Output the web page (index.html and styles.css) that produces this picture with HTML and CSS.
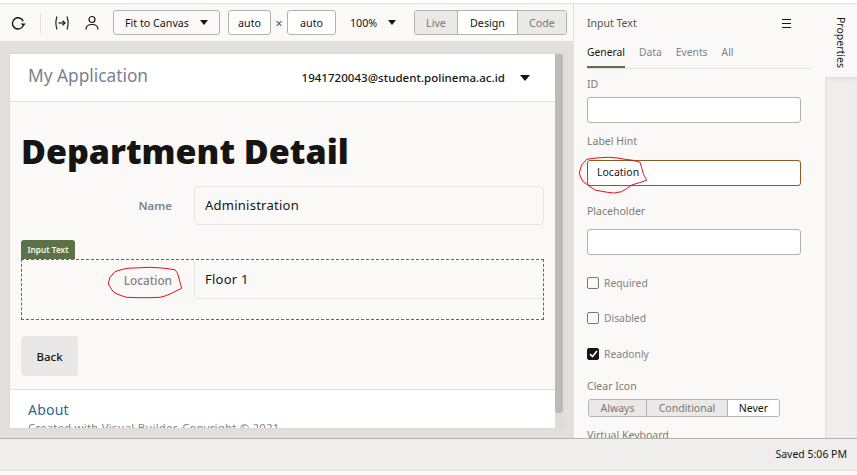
FILE: index.html
```html
<!DOCTYPE html>
<html lang="en">
<head>
<meta charset="utf-8">
<title>Department Detail</title>
<link rel="stylesheet" href="styles.css">
</head>
<body>
<div class="app">
  <div class="main">
    <div class="workspace">
      <div class="toolbar">
        <svg class="ico refresh" width="16" height="16" viewBox="0 0 16 16"><path d="M13.200 6.200A5.600 5.600 0 1 0 13 11" fill="none" stroke="#161513" stroke-width="1.400"/><path d="M10.800 8.600h5l-2.500 2.900z" fill="#161513"/></svg>
        <span class="tsep"></span>
        <svg class="ico vars" width="16" height="16" viewBox="0 0 16 16"><path d="M3 1.500Q.8 8 3 14.500M13 1.500Q15.200 8 13 14.500" fill="none" stroke="#161513" stroke-width="1.100"/><path d="M4.500 8h6.500" stroke="#161513" stroke-width="1.200"/><path d="M8.500 5.800 11 8l-2.500 2.200" fill="none" stroke="#161513" stroke-width="1.200"/></svg>
        <svg class="ico user" width="14" height="16" viewBox="0 0 14 16"><circle cx="7" cy="4.500" r="3" fill="none" stroke="#161513" stroke-width="1.200"/><path d="M1 14.500C1 11 3.500 9.500 7 9.500s6 1.500 6 5" fill="none" stroke="#161513" stroke-width="1.200"/></svg>
        <button class="tbtn fit">Fit to Canvas<span class="caret"></span></button>
        <span class="tinput a1">auto</span>
        <span class="times">×</span>
        <span class="tinput a2">auto</span>
        <span class="zoom">100%<span class="caret"></span></span>
        <div class="seg modes">
          <span class="off w-live">Live</span><span class="on w-design">Design</span><span class="off w-code">Code</span>
        </div>
      </div>
      <div class="canvas">
        <div class="page">
          <div class="scrollarea">
            <div class="apphead">
              <span class="apptitle">My Application</span>
              <span class="appuser">1941720043@student.polinema.ac.id</span>
              <span class="caret big"></span>
            </div>
            <div class="content">
              <h1>Department Detail</h1>
              <div class="row">
                <span class="flabel">Name</span>
                <div class="fvalue">Administration</div>
              </div>
              <div class="selected">
                <span class="seltag">Input Text</span>
                <div class="row inner">
                  <span class="flabel">Location
                    <svg class="scribble" width="76" height="33" viewBox="0 0 76 33"><path d="M8 5.700 13 4l7-1.700L32 1.800 43 1.300 56 2.100 68 3.700 70 6.500 71.300 9.700 72.800 15.700 74.700 22.300 69 25 63 28 58 30 53 31.300 43 31.700 31 31.700 19.700 31.300 14 29.500 8 27 5 24 1.300 18 2 14.500 3 11.300z" fill="none" stroke="#e8101c" stroke-width="1"/></svg>
                  </span>
                  <div class="fvalue">Floor 1</div>
                </div>
              </div>
              <button class="back">Back</button>
            </div>
            <div class="appfoot">
              <div class="about">About</div>
              <div class="copy">Created with Visual Builder, Copyright © 2021</div>
            </div>
          </div>
          <div class="sbar"><div class="thumb"></div></div>
        </div>
      </div>
    </div>
    <aside class="props">
      <div class="phead"><span>Input Text</span>
        <svg width="11" height="9" viewBox="0 0 11 9"><path d="M1 .5h9M1 4.500h9M1 8.500h9" stroke="#161513" stroke-width="1"/></svg>
      </div>
      <div class="tabs"><span class="tab active">General</span><span class="tab">Data</span><span class="tab">Events</span><span class="tab">All</span></div>
      <div class="plabel l-id">ID</div>
      <div class="pinput"></div>
      <div class="plabel l-hint">Label Hint</div>
      <div class="pinput focus">Location
        <svg class="scribble2" width="71" height="39" viewBox="0 0 71 39"><path d="M8.700 3.300 18 2l12.300-.7L40 2l7 1.300 8 1 7 2 1.500 5 1.800 6.300 1.400 3 2 3.700-7 2.200-8 2.500-5 3.500-5 3.200-8 1.300-7-.8L17 34l-6-4-5.700-4.300L3 22l-1.700-4.700 1-4 1.400-4.300z" fill="none" stroke="#e8101c" stroke-width="1"/></svg>
      </div>
      <div class="plabel l-ph">Placeholder</div>
      <div class="pinput after-ph"></div>
      <label class="check c1"><span class="box"></span>Required</label>
      <label class="check c2"><span class="box"></span>Disabled</label>
      <label class="check c3"><span class="box checked"><svg width="9" height="8" viewBox="0 0 9 8"><path d="M1 4.200 3.500 6.500 8 1" fill="none" stroke="#fff" stroke-width="1.600"/></svg></span>Readonly</label>
      <div class="plabel l-clear">Clear Icon</div>
      <div class="seg clear"><span class="off w-always">Always</span><span class="off w-cond">Conditional</span><span class="on w-never">Never</span></div>
      <div class="plabel l-vk">Virtual Keyboard</div>
    </aside>
    <div class="rail">
      <div class="railtab"><span>Properties</span></div>
      <div class="railrest"></div>
    </div>
  </div>
  <div class="status">Saved 5:06 PM</div>
</div>
</body>
</html>
```
FILE: styles.css
```css
* { box-sizing: border-box; }
html, body { margin: 0; padding: 0; height: 100%; }
body { background: #fff; font-family: "Noto Sans", "Open Sans", sans-serif; color: #161513; overflow: hidden; }
.app { width: 857px; height: 475px; display: flex; flex-direction: column; }
.main { height: 435px; display: flex; overflow: hidden; border-top: 1px solid #e4e1dd; margin-top: 3px; flex: none; }
.workspace { width: 574px; display: flex; flex-direction: column; flex: none; border-right: 1px solid #e4e1dd; }
.toolbar { height: 37px; background: #fbf9f8; display: flex; align-items: center; flex: none; padding-left: 10px; font-size: 10.700px; }
.ico { flex: none; display: block; }
.refresh { margin-top: 1px; }
.tsep { width: 1px; height: 20px; background: #e4e1dd; margin: 0 13px 0 14px; flex: none; }
.vars { margin-right: 15px; }
.user { margin-right: 14px; }
.tbtn, .tinput { height: 25px; border: 1px solid #b5b2ae; border-radius: 3px; background: #fff; font: inherit; color: #161513; display: flex; align-items: center; }
.tbtn.fit { width: 107px; background: #fbf9f8; padding: 0 0 0 11px; margin-right: 8px; }
.caret { display: inline-block; width: 0; height: 0; border-left: 4.500px solid transparent; border-right: 4.500px solid transparent; border-top: 5px solid #161513; }
.fit .caret { margin-left: 11px; }
.tinput { justify-content: center; }
.a1 { width: 43px; }
.a2 { width: 49px; }
.times { width: 16px; text-align: center; color: #55524e; font-size: 13px; }
.zoom { margin-left: 14px; width: 64px; display: flex; align-items: center; flex: none; }
.zoom .caret { margin-left: 11px; }
.seg { display: flex; border: 1px solid #b5b2ae; border-radius: 3px; overflow: hidden; }
.seg span { display: flex; align-items: center; justify-content: center; border-left: 1px solid #b5b2ae; }
.seg span:first-child { border-left: 0; }
.seg .off { background: #ebe9e7; color: #7a7672; }
.seg .on { background: #fff; color: #161513; }
.modes { height: 25px; }
.w-live { width: 42px; }
.w-design { width: 60px; }
.w-code { width: 49px; }
.canvas { flex: 1; background: #e3e0dc; padding: 13px 11px 10px 10px; min-height: 0; display: flex; }
.page { flex: 1; display: flex; min-width: 0; box-shadow: 0 0 3px #d6d3cf; }
.scrollarea { width: 545px; background: #faf9f7; overflow: hidden; flex: none; }
.apphead { height: 48px; background: #fff; border-bottom: 1px solid #e4e1dd; display: flex; align-items: center; padding: 0 25px 0 18px; }
.apptitle { font-size: 17.300px; color: #78828c; font-weight: 400; flex: 1; padding-bottom: 4px; }
.appuser { font-size: 11.500px; color: #161513; letter-spacing: .04px; margin-right: 15px; font-weight: 500; }
.caret.big { border-left-width: 5.500px; border-right-width: 5.500px; border-top-width: 6px; }
.content { padding: 27px 11px 0 11px; height: 288px; border-bottom: 1px solid #e4e1dd; }
h1 { margin: 0; font-size: 34px; line-height: 44px; font-weight: 900; color: #161513; white-space: nowrap; }
.row { display: flex; align-items: stretch; }
.content > .row { margin-top: 13px; height: 39px; }
.flabel { width: 151px; padding-top: 12px; text-align: right; font-size: 11.500px; font-weight: 600; color: #7a8490; flex: none; position: relative; line-height: 16px; }
.fvalue { margin-left: 22px; flex: 1; background: #faf9f7; border: 1px solid #e8e6e3; border-radius: 4px; font-size: 13px; padding: 0 0 1px 10px; letter-spacing: .25px; display: flex; align-items: center; color: #161513; }
.selected { position: relative; margin-top: 34px; height: 61px; border: 1px dashed #5e7049; }
.seltag { position: absolute; left: -1px; top: -20px; height: 19px; width: 54px; background: #5a7246; color: #f4f5f0; font-size: 8.300px; font-weight: 600; border-radius: 3px 3px 0 0; display: flex; align-items: center; justify-content: center; }
.row.inner { height: 39px; }
.row.inner .flabel { width: 150px; padding-top: 12px; font-size: 11.800px; font-weight: 500; color: #86827e; }
.row.inner .fvalue { flex: 1; border-radius: 4px 0 0 4px; border-right: 0; border-top: 0; padding: 0 0 0 10px; }
.scribble { position: absolute; left: 85px; top: 6px; }
.back { display: block; margin-top: 16px; width: 57px; height: 40px; border: 0; border-radius: 4px; background: #e9e8e6; font: inherit; font-size: 11.500px; font-weight: 500; color: #161513; padding: 0; }
.appfoot { background: #fff; padding: 10px 18px 0; height: 60px; }
.about { font-size: 14px; color: #2a6a8f; line-height: 20px; letter-spacing: .2px; }
.copy { font-size: 11.300px; color: #7a8490; line-height: 16px; margin-top: 0; letter-spacing: .25px; white-space: nowrap; }
.sbar { width: 8px; background: #dedcd8; flex: none; }
.thumb { height: 359px; background: #bdbbb7; border-radius: 0 3px 3px 3px; }
.props { width: 251px; background: #fbf9f8; flex: none; padding: 0 12px 0 13px; overflow: hidden; font-size: 10.500px; }
.phead { height: 38px; display: flex; align-items: center; justify-content: space-between; font-size: 10.500px; color: #55524e; padding-right: 21px; }
.tabs { display: flex; align-items: flex-start; gap: 14px; height: 27px; border-bottom: 1px solid #e4e1dd; width: 224px; font-size: 10.300px; color: #7a8490; }
.tab { height: 26px; padding-top: 3px; }
.tab.active { color: #161513; border-bottom: 2px solid #5a7246; }
.plabel { color: #7d7975; font-size: 10.500px; line-height: 14px; }
.l-id { margin-top: 8px; }
.pinput { width: 214px; height: 26px; margin-top: 6px; background: #fff; border: 1px solid #b5b2ae; border-radius: 3px; font-size: 10.500px; display: flex; align-items: center; padding-left: 9px; position: relative; color: #161513; }
.pinput.focus { border-color: #8a5a1e; margin-top: 12px; padding-bottom: 2px; }
.l-hint { margin-top: 11px; }
.l-ph { margin-top: 18px; }
.pinput.after-ph { margin-top: 11px; }
.scribble2 { position: absolute; left: -10px; top: -5px; }
.check { display: flex; align-items: center; color: #85817d; height: 16px; font-size: 10.300px; }
.c1 { margin-top: 20px; }
.c2 { margin-top: 19px; }
.c3 { margin-top: 20px; }
.box { width: 12px; height: 12px; margin-right: 5px; border: 1px solid #6c7c8c; border-radius: 2px; background: #fbf9f8; display: flex; align-items: center; justify-content: center; flex: none; }
.box.checked { background: #161513; border-color: #161513; }
.l-clear { margin-top: 17px; }
.clear { margin: 6px 0 0 1px; height: 18px; width: 192px; font-size: 10.500px; }
.w-always { width: 57px; }
.w-cond { width: 81px; }
.w-never { width: 52px; }
.l-vk { margin-top: 11px; white-space: nowrap; }
.rail { flex: 1; display: flex; flex-direction: column; background: #fff; }
.railtab { height: 73px; background: #fbf9f8; display: flex; justify-content: center; padding: 13px 0 0 0; flex: none; }
.railtab span { writing-mode: vertical-rl; font-size: 10.500px; color: #161513; }
.railrest { flex: 1; background: #efeeec; box-shadow: inset 0 2px 3px #e0dedb; border-left: 1px solid #e4e1dd; }
.status { height: 33px; flex: none; background: #efeeec; border-top: 1px solid #b5b2ae; border-bottom: 1px solid #dedcd9; display: flex; align-items: center; justify-content: flex-end; padding: 0 10px 2px 0; font-size: 10.500px; color: #161513; }
```
